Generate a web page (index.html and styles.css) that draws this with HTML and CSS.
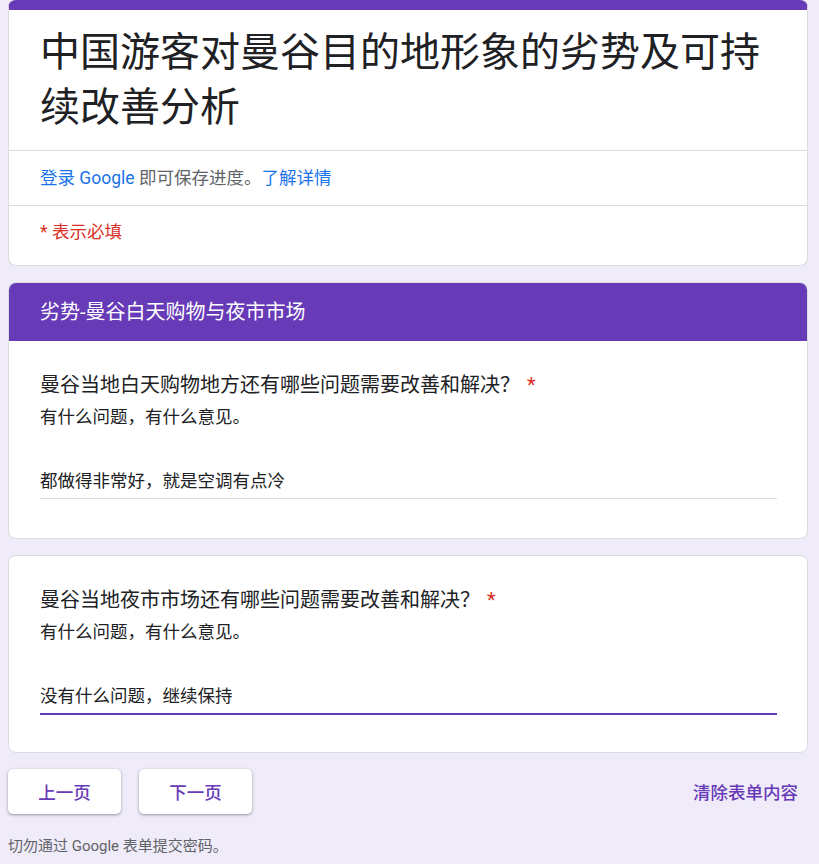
FILE: index.html
```html
<!DOCTYPE html>
<html>
<head>
  <meta charset="utf-8">
  <title>中国游客对曼谷目的地形象的劣势及可持续改善分析</title>
  <link rel="stylesheet" href="styles.css">
</head>
<body>
  <div class="container">
    <div class="card title-card">
      <h1 class="form-title">中国游客对曼谷目的地形象的劣势及可持续改善分析</h1>
      <div class="title-row">
        <a href="#" class="link">登录 Google</a> 即可保存进度。<a href="#" class="link">了解详情</a>
      </div>
      <div class="title-row required-note">* 表示必填</div>
    </div>

    <div class="card">
      <div class="section-header">劣势-曼谷白天购物与夜市市场</div>
      <div class="question">
        <div class="question-title">曼谷当地白天购物地方还有哪些问题需要改善和解决？ <span class="star">*</span></div>
        <div class="question-desc">有什么问题，有什么意见。</div>
        <div class="answer">都做得非常好，就是空调有点冷</div>
      </div>
    </div>

    <div class="card">
      <div class="question">
        <div class="question-title">曼谷当地夜市市场还有哪些问题需要改善和解决？ <span class="star">*</span></div>
        <div class="question-desc">有什么问题，有什么意见。</div>
        <div class="answer answer-active">没有什么问题，继续保持</div>
      </div>
    </div>

    <div class="nav-row">
      <button type="button" class="nav-button">上一页</button>
      <button type="button" class="nav-button">下一页</button>
      <a href="#" class="clear-link">清除表单内容</a>
    </div>

    <div class="footer-note">切勿通过 Google 表单提交密码。</div>
  </div>
</body>
</html>
```

FILE: styles.css
```css
body {
  margin: 0;
  font-family: Roboto, "Noto Sans CJK SC", sans-serif;
  background-color: #f0ebf8;
  color: #202124;
}

.container {
  width: 800px;
  margin-left: 8px;
}

.card {
  background-color: #fff;
  border: 1px solid #dadce0;
  border-radius: 8px;
  margin-bottom: 16px;
  overflow: hidden;
}

.title-card {
  border-top: 10px solid #673ab7;
  margin-top: 0;
}

.form-title {
  margin: 0;
  padding: 15px 31px 15px;
  font-size: 40px;
  font-weight: 400;
  line-height: 55px;
  color: #202124;
}

.title-row {
  border-top: 1px solid #dadce0;
  padding: 16px 31px;
  font-size: 17.5px;
  line-height: 22px;
  color: #5f6368;
}

.required-note {
  padding: 15px 31px 22px;
  color: #d93025;
}

.link {
  color: #1a73e8;
  text-decoration: none;
}

.section-header {
  background-color: #673ab7;
  color: #fff;
  font-size: 20px;
  line-height: 28px;
  padding: 15px 31px 15px;
}

.question {
  padding: 30px 30px 39px 31px;
}

.question-title {
  font-size: 20px;
  line-height: 28px;
}

.star {
  color: #d93025;
  margin-left: 2px;
}

.question-desc {
  margin-top: 5px;
  font-size: 17.5px;
  line-height: 26px;
}

.answer {
  margin-top: 40px;
  padding-bottom: 6px;
  font-size: 17.5px;
  line-height: 22px;
  border-bottom: 1px solid #dadce0;
}

.answer-active {
  border-bottom: 2px solid #673ab7;
  margin-bottom: -2px;
}

.nav-row {
  display: flex;
  align-items: center;
  gap: 18px;
  margin-top: 16px;
}

.nav-button {
  width: 113px;
  height: 45px;
  background-color: #fff;
  border: none;
  border-radius: 5px;
  box-shadow: 0 1px 2px rgba(60, 64, 67, 0.3), 0 1px 3px 1px rgba(60, 64, 67, 0.15);
  color: #673ab7;
  font-family: Roboto, "Noto Sans CJK SC", sans-serif;
  font-size: 17.5px;
  font-weight: 500;
  cursor: pointer;
}

.clear-link {
  margin-left: auto;
  margin-right: 10px;
  color: #673ab7;
  font-size: 17.5px;
  font-weight: 500;
  text-decoration: none;
}

.footer-note {
  margin-top: 22px;
  font-size: 15px;
  line-height: 20px;
  color: #5f6368;
}
```
